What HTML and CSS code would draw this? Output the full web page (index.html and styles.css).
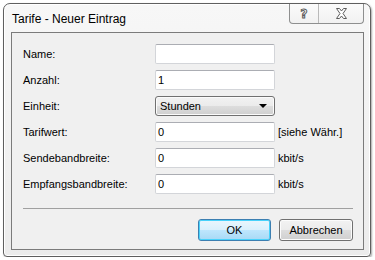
FILE: index.html
```html
<!DOCTYPE html>
<html lang="de">
<head>
<meta charset="utf-8">
<title>Tarife - Neuer Eintrag</title>
<link rel="stylesheet" href="styles.css">
</head>
<body>
<div class="window">
  <div class="titlebar">
    <span class="title">Tarife - Neuer Eintrag</span>
    <div class="caption-buttons">
      <span class="cap-btn help">?</span>
      <span class="cap-btn close">
        <svg width="13" height="11" viewBox="0 0 13 11"><path d="M1.5 0.5h3l2 2.5 2-2.5h3l-3.5 5 3.5 5h-3l-2-2.5-2 2.5h-3l3.5-5z" fill="#fff" stroke="#5c5c5c" stroke-width="1" stroke-linejoin="round"/></svg>
      </span>
    </div>
  </div>
  <div class="client">
    <div class="form">
      <label class="lbl">Name:</label>
      <div class="field"></div>
      <span class="unit"></span>

      <label class="lbl">Anzahl:</label>
      <div class="field">1</div>
      <span class="unit"></span>

      <label class="lbl">Einheit:</label>
      <div class="combo"><span>Stunden</span><span class="arrow"></span></div>
      <span class="unit"></span>

      <label class="lbl">Tarifwert:</label>
      <div class="field">0</div>
      <span class="unit">[siehe Währ.]</span>

      <label class="lbl">Sendebandbreite:</label>
      <div class="field">0</div>
      <span class="unit">kbit/s</span>

      <label class="lbl">Empfangsbandbreite:</label>
      <div class="field">0</div>
      <span class="unit">kbit/s</span>
    </div>
    <div class="separator"></div>
    <div class="buttons">
      <button class="btn default">OK</button>
      <button class="btn cancel">Abbrechen</button>
    </div>
  </div>
</div>
</body>
</html>
```

FILE: styles.css
```css
html, body {
  margin: 0;
  padding: 0;
  background: #ffffff;
}

body {
  padding: 3px 0 0 3px;
  font-family: "Liberation Sans", Arial, sans-serif;
}

.window {
  box-sizing: border-box;
  width: 368px;
  height: 254px;
  border: 1px solid #5f5f5f;
  border-radius: 7px 7px 4px 4px;
  background: linear-gradient(#f7f7f7, #ececec);
  box-shadow: 1px 1px 2px rgba(0, 0, 0, 0.35), inset 0 0 0 1px #ffffff;
  padding: 0 6px 6px 7px;
  display: flex;
  flex-direction: column;
}

.titlebar {
  height: 28px;
  display: flex;
  justify-content: space-between;
  align-items: flex-start;
}

.title {
  font-size: 12px;
  color: #000;
  margin-top: 8px;
  margin-left: 1px;
}

.caption-buttons {
  display: flex;
  height: 19px;
  border: 1px solid #8e8f8f;
  border-top: none;
  border-radius: 0 0 4px 4px;
  background: linear-gradient(#fbfbfb, #f1f1f1);
  overflow: hidden;
}

.cap-btn {
  display: flex;
  align-items: center;
  justify-content: center;
  height: 19px;
}

.help {
  width: 28px;
  border-right: 1px solid #b9b9b9;
  font-family: "DejaVu Sans", sans-serif;
  font-weight: bold;
  font-size: 12px;
  color: #fff;
  -webkit-text-stroke: 1px #5c5c5c;
}

.close {
  width: 44px;
}

.client {
  flex: 1;
  border: 1px solid #7b7b7b;
  background: #f0f0f0;
  padding: 11px 10px 0 11px;
  display: flex;
  flex-direction: column;
}

.form {
  display: grid;
  grid-template-columns: 132px 120px 1fr;
  grid-auto-rows: 20px;
  row-gap: 6px;
  align-items: center;
  font-size: 11px;
  color: #000;
}

.lbl {
  white-space: nowrap;
}

.unit {
  padding-left: 3px;
  white-space: nowrap;
}

.field {
  box-sizing: border-box;
  height: 20px;
  border: 1px solid #d3d5d9;
  border-top-color: #abadb3;
  border-radius: 2px;
  background: #ffffff;
  padding: 0 0 0 2px;
  line-height: 18px;
}

.combo {
  box-sizing: border-box;
  height: 20px;
  border: 1px solid #707070;
  border-radius: 3px;
  background: linear-gradient(#f2f2f2 0%, #ebebeb 50%, #dddddd 51%, #cfcfcf 100%);
  box-shadow: inset 0 0 0 1px #fbfbfb;
  display: flex;
  align-items: center;
  justify-content: space-between;
  padding: 0 7px 0 4px;
}

.arrow {
  width: 0;
  height: 0;
  border-left: 4px solid transparent;
  border-right: 4px solid transparent;
  border-top: 4px solid #000;
}

.separator {
  height: 1px;
  background: #a0a0a0;
  margin-top: 14px;
}

.buttons {
  display: flex;
  justify-content: flex-end;
  gap: 8px;
  margin-top: 10px;
}

.btn {
  box-sizing: border-box;
  height: 22px;
  width: 73px;
  border: 1px solid #707070;
  border-radius: 3px;
  font-family: "Liberation Sans", Arial, sans-serif;
  font-size: 11px;
  color: #000;
  padding: 0;
  background: linear-gradient(#f2f2f2 0%, #ebebeb 50%, #dddddd 51%, #cfcfcf 100%);
  box-shadow: inset 0 0 0 1px #fcfcfc;
}

.btn.default {
  border-color: #3c7fb1;
  background: linear-gradient(#eaf6fd 0%, #d9f0fc 50%, #bee6fd 51%, #a7d9f5 100%);
  box-shadow: inset 0 0 0 1px #48d2fb;
}

.btn.cancel {
  width: 74px;
}
```
